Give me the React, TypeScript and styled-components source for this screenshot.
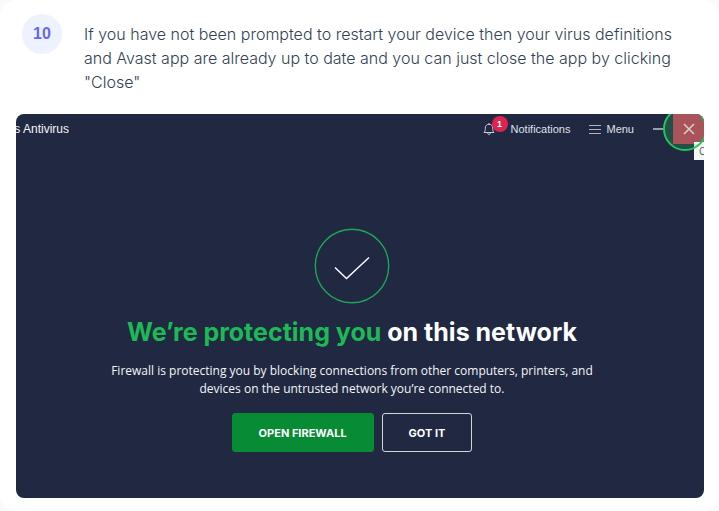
import React from "react";
import styled, { createGlobalStyle } from "styled-components";

const GlobalStyle = createGlobalStyle`
  *, *::before, *::after { box-sizing: border-box; }
  body { margin: 0; background: #f8fafc; }
  button { font: inherit; color: inherit; margin: 0; cursor: pointer; }
`;

const Card = styled.article`
  padding: 14px 15px 13px 16px;
  border-radius: 16px;
  background: #ffffff;
  font-family: Inter, "Liberation Sans", sans-serif;
`;

const Step = styled.header`
  display: flex;
  align-items: flex-start;
  gap: 22px;
  padding: 0 32px 0 6px;
`;

const StepNumber = styled.span`
  display: flex;
  flex: none;
  align-items: center;
  justify-content: center;
  width: 40px;
  height: 40px;
  border-radius: 50%;
  background: #eef2ff;
  color: #6366f1;
  font-family: "Liberation Sans", sans-serif;
  font-size: 16px;
  font-weight: 700;
`;

const StepText = styled.p`
  margin: 0;
  padding-top: 8px;
  color: #334155;
  font-size: 16px;
  font-weight: 300;
  line-height: 24px;
`;

const AppWindow = styled.section`
  position: relative;
  margin-top: 20px;
  padding-bottom: 46px;
  overflow: hidden;
  border-radius: 8px;
  background: #212942;
  color: #f4f5f8;
`;

const TitleBar = styled.div`
  display: flex;
  align-items: center;
  height: 30px;
  color: #dfe1e8;
  font-family: "Liberation Sans", sans-serif;
  font-size: 11px;
`;

const AppName = styled.span`
  display: flex;
  justify-content: flex-end;
  width: 53px;
  margin-right: auto;
  overflow: hidden;
  color: #f4f5f8;
  font-size: 12px;
  white-space: nowrap;
`;

const BarButton = styled.button<{ $gap: number; $after: number }>`
  display: flex;
  align-items: center;
  gap: ${(p) => p.$gap}px;
  margin-right: ${(p) => p.$after}px;
  padding: 0;
  border: 0;
  background: none;
`;

const BellBox = styled.span`
  position: relative;
  display: flex;
`;

const Badge = styled.span`
  position: absolute;
  left: 9px;
  bottom: 4px;
  display: flex;
  align-items: center;
  justify-content: center;
  width: 16px;
  height: 16px;
  border-radius: 50%;
  background: #dc2450;
  color: #ffffff;
  font-size: 9px;
  font-weight: 700;
`;

const WindowButton = styled.button<{ $close?: boolean }>`
  display: flex;
  align-items: center;
  justify-content: center;
  width: 31px;
  height: 30px;
  padding: 0;
  border: 0;
  background: ${(p) => (p.$close ? "#a9535b" : "none")};
`;

const ClickMarker = styled.span`
  position: absolute;
  top: -7px;
  right: -3px;
  width: 44px;
  height: 44px;
  border: 2px solid #22c55e;
  border-radius: 50%;
  background:
    linear-gradient(to right, rgba(34, 197, 94, 0.25) 8px, transparent 8px),
    linear-gradient(to top, rgba(34, 197, 94, 0.25) 5px, transparent 5px);
  pointer-events: none;
`;

const Tooltip = styled.span`
  position: absolute;
  top: 28px;
  right: 0;
  width: 10px;
  height: 18px;
  padding-left: 5px;
  overflow: hidden;
  background: #f4f7f4;
  color: #555a5a;
  font-size: 10px;
  line-height: 18px;
`;

const Message = styled.div`
  display: flex;
  flex-direction: column;
  align-items: center;
  padding: 84px 32px 0 16px;
  text-align: center;
`;

const Heading = styled.h1`
  margin: 11px 0 0;
  color: #ffffff;
  font-size: 25px;
  font-weight: 700;
  line-height: 34px;
`;

const Highlight = styled.span`
  color: #1db954;
`;

const Description = styled.p`
  max-width: 500px;
  margin: 13px 0 0;
  font-family: "Open Sans", "Liberation Sans", sans-serif;
  font-size: 12px;
  line-height: 18px;
`;

const Actions = styled.div`
  display: flex;
  gap: 8px;
  margin-top: 15px;
`;

const ActionButton = styled.button<{ $primary?: boolean }>`
  height: 39px;
  padding: 0 26px;
  border: 1px solid ${(p) => (p.$primary ? "#078b34" : "#d3d5dc")};
  border-radius: 3px;
  background: ${(p) => (p.$primary ? "#078b34" : "transparent")};
  color: #ffffff;
  font-size: 11px;
  font-weight: 700;
`;

export default function App() {
  return (
    <>
      <GlobalStyle />
      <Card>
        <Step>
          <StepNumber>10</StepNumber>
          <StepText>
            If you have not been prompted to restart your device then your virus definitions and
            Avast app are already up to date and you can just close the app by clicking "Close"
          </StepText>
        </Step>
        <AppWindow>
          <TitleBar>
            <AppName>s Antivirus</AppName>
            <BarButton $gap={16} $after={19}>
              <BellBox>
                <svg width="12" height="14" viewBox="0 0 12 14" fill="none" stroke="#c9cdd7" strokeLinejoin="round">
                  <path d="M1 10.5C2 9.5 2.3 8.5 2.3 6.2C2.3 3.8 3.6 2.3 6 2.3C8.4 2.3 9.7 3.8 9.7 6.2C9.7 8.5 10 9.5 11 10.5Z" />
                  <path d="M6 2.3V1M4.8 10.8C4.8 13.4 7.2 13.4 7.2 10.8" />
                </svg>
                <Badge>1</Badge>
              </BellBox>
              Notifications
            </BarButton>
            <BarButton $gap={5} $after={8}>
              <svg width="12" height="11" viewBox="0 0 12 11" stroke="#aeb3c0">
                <path d="M0 1.5H12M0 5.5H12M0 9.5H12" />
              </svg>
              Menu
            </BarButton>
            <WindowButton aria-label="Minimize">
              <svg width="10" height="2" viewBox="0 0 10 2">
                <path d="M0 1H10" stroke="#c0c4ce" strokeWidth="1.4" />
              </svg>
            </WindowButton>
            <WindowButton $close aria-label="Close">
              <svg width="12" height="12" viewBox="0 0 12 12">
                <path d="M1 1L11 11M11 1L1 11" stroke="#dccfc8" strokeWidth="1.5" />
              </svg>
            </WindowButton>
          </TitleBar>
          <Tooltip>Close</Tooltip>
          <ClickMarker />
          <Message>
            <svg width="76" height="76" viewBox="0 0 76 76" fill="none">
              <circle cx="38" cy="38" r="36.7" stroke="#1fa457" strokeWidth="1.4" />
              <path d="M21 39.5L32.5 50.5L55 29.5" stroke="#ffffff" strokeWidth="1.4" />
            </svg>
            <Heading>
              <Highlight>We’re protecting you</Highlight> on this network
            </Heading>
            <Description>
              Firewall is protecting you by blocking connections from other computers, printers, and
              devices on the untrusted network you’re connected to.
            </Description>
            <Actions>
              <ActionButton $primary>OPEN FIREWALL</ActionButton>
              <ActionButton>GOT IT</ActionButton>
            </Actions>
          </Message>
        </AppWindow>
      </Card>
    </>
  );
}
